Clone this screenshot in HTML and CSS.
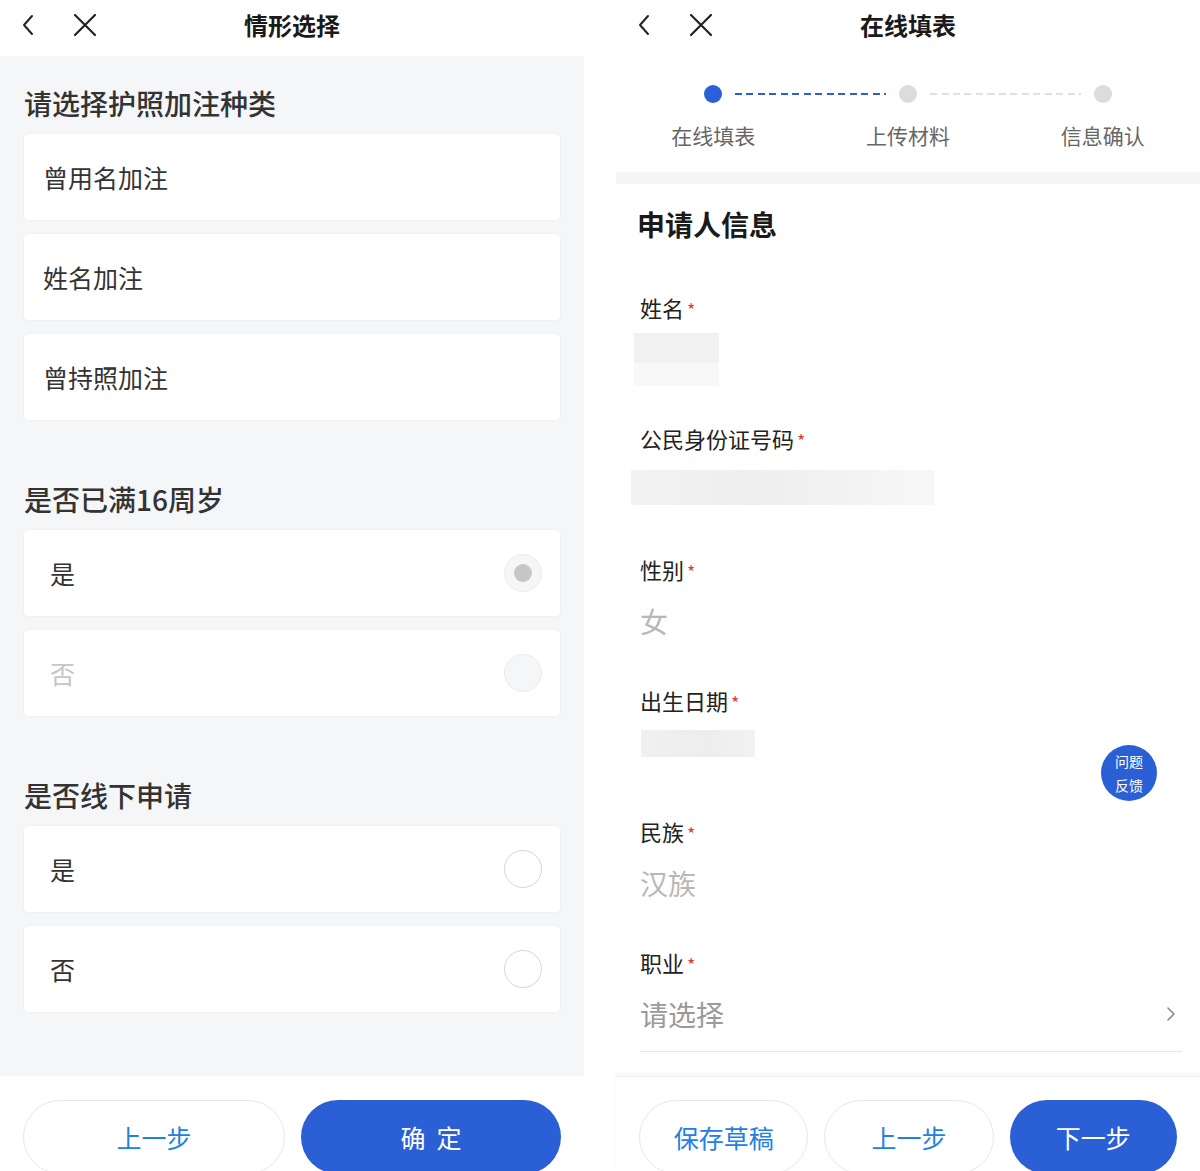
FILE: index.html
```html
<!DOCTYPE html>
<html lang="zh-CN">
<head>
<meta charset="utf-8">
<title>护照加注</title>
<link rel="stylesheet" href="styles.css">
</head>
<body>
<div class="screen">
  <section class="phone">
    <header class="nav">
      <div class="nav-icons">
        <svg class="ico" viewBox="0 0 24 24" width="24" height="24"><path d="M15 3 L7 12 L15 21" fill="none" stroke="#222" stroke-width="2" stroke-linecap="round" stroke-linejoin="round"/></svg>
        <svg class="ico" viewBox="0 0 24 24" width="24" height="24"><path d="M2 2 L22 22 M22 2 L2 22" fill="none" stroke="#222" stroke-width="2.2" stroke-linecap="round"/></svg>
      </div>
      <h1 class="nav-title">情形选择</h1>
    </header>
    <main class="choices">
      <h2 class="group-title first">请选择护照加注种类</h2>
      <div class="card-list">
        <div class="card">曾用名加注</div>
        <div class="card">姓名加注</div>
        <div class="card">曾持照加注</div>
      </div>

      <h2 class="group-title">是否已满16周岁</h2>
      <div class="card-list">
        <div class="card radio-row"><span>是</span><span class="radio checked-disabled"></span></div>
        <div class="card radio-row disabled"><span>否</span><span class="radio empty-disabled"></span></div>
      </div>

      <h2 class="group-title">是否线下申请</h2>
      <div class="card-list">
        <div class="card radio-row"><span>是</span><span class="radio"></span></div>
        <div class="card radio-row"><span>否</span><span class="radio"></span></div>
      </div>
    </main>
    <footer class="actions plain">
      <button class="btn ghost">上一步</button>
      <button class="btn primary">确&nbsp;&nbsp;定</button>
    </footer>
  </section>

  <section class="phone white">
    <header class="nav">
      <div class="nav-icons">
        <svg class="ico" viewBox="0 0 24 24" width="24" height="24"><path d="M15 3 L7 12 L15 21" fill="none" stroke="#222" stroke-width="2" stroke-linecap="round" stroke-linejoin="round"/></svg>
        <svg class="ico" viewBox="0 0 24 24" width="24" height="24"><path d="M2 2 L22 22 M22 2 L2 22" fill="none" stroke="#222" stroke-width="2.2" stroke-linecap="round"/></svg>
      </div>
      <h1 class="nav-title">在线填表</h1>
    </header>
    <div class="stepper">
      <div class="dots">
        <span class="dot active"></span>
        <span class="line active"></span>
        <span class="dot"></span>
        <span class="line"></span>
        <span class="dot"></span>
      </div>
      <div class="step-labels">
        <span>在线填表</span>
        <span>上传材料</span>
        <span>信息确认</span>
      </div>
    </div>
    <div class="band"></div>
    <main class="form">
      <h2 class="form-title">申请人信息</h2>
      <div class="field">
        <div class="label">姓名<i class="req">*</i></div>
        <div class="value"><span class="blur blur-name"></span></div>
      </div>
      <div class="field">
        <div class="label">公民身份证号码<i class="req">*</i></div>
        <div class="value"><span class="blur blur-id"></span></div>
      </div>
      <div class="field">
        <div class="label">性别<i class="req">*</i></div>
        <div class="value muted">女</div>
      </div>
      <div class="field">
        <div class="label">出生日期<i class="req">*</i></div>
        <div class="value"><span class="blur blur-date"></span></div>
      </div>
      <div class="field">
        <div class="label">民族<i class="req">*</i></div>
        <div class="value muted">汉族</div>
      </div>
      <div class="field select">
        <div class="label">职业<i class="req">*</i></div>
        <div class="value placeholder">
          <span>请选择</span>
          <svg viewBox="0 0 10 16" width="10" height="16"><path d="M2 2 L8 8 L2 14" fill="none" stroke="#888" stroke-width="1.6" stroke-linecap="round" stroke-linejoin="round"/></svg>
        </div>
      </div>
      <div class="feedback">问题<br>反馈</div>
    </main>
    <footer class="actions shadowed">
      <button class="btn ghost">保存草稿</button>
      <button class="btn ghost">上一步</button>
      <button class="btn primary">下一步</button>
    </footer>
  </section>
</div>
</body>
</html>
```

FILE: styles.css
```css
* { box-sizing: border-box; margin: 0; padding: 0; }

html, body {
  width: 1200px;
  height: 1171px;
  overflow: hidden;
  background: #fff;
  font-family: "Noto Sans CJK SC", "Noto Sans", sans-serif;
  color: #222;
}

.screen {
  display: flex;
  gap: 32px;
  height: 1171px;
}

.phone {
  width: 584px;
  height: 1171px;
  display: flex;
  flex-direction: column;
  background: #f5f6f8;
  position: relative;
}
.phone.white { background: #fff; }

.nav {
  height: 56px;
  flex: none;
  background: #fff;
  display: flex;
  align-items: center;
  position: relative;
}
.nav-icons {
  display: flex;
  gap: 32px;
  padding-left: 17px;
  padding-bottom: 6px;
  align-items: center;
}
.ico { display: block; }
.nav-title {
  position: absolute;
  left: 0; right: 0; top: 0;
  text-align: center;
  line-height: 50px;
  font-size: 24px;
  font-weight: 700;
  color: #1a1a1a;
  pointer-events: none;
}

/* left screen */
.choices {
  flex: 1;
  padding: 0 23px;
  display: flex;
  flex-direction: column;
}
.group-title {
  font-size: 28px;
  font-weight: 500;
  line-height: 36px;
  color: #333;
  margin-top: 60px;
  margin-bottom: 12px;
  padding-left: 1px;
}
.group-title.first { margin-top: 29px; }

.card-list {
  display: flex;
  flex-direction: column;
  gap: 12px;
}
.card {
  height: 88px;
  background: #fff;
  border: 1px solid #eef0f2;
  border-radius: 5px;
  display: flex;
  align-items: center;
  padding-left: 19px;
  font-size: 25px;
  color: #333;
}

.radio-row {
  justify-content: space-between;
  padding-left: 26px;
  padding-right: 18px;
}
.radio-row.disabled { color: #c6c6c6; }

.radio {
  width: 38px;
  height: 38px;
  border-radius: 50%;
  border: 1.5px solid #d6d6d6;
  background: #fff;
  display: flex;
  align-items: center;
  justify-content: center;
}
.radio.checked-disabled {
  border-color: #ececec;
  background: #f6f6f6;
}
.radio.checked-disabled::after {
  content: "";
  width: 18px;
  height: 18px;
  border-radius: 50%;
  background: #c6c6c6;
}
.radio.empty-disabled {
  border-color: #ececec;
  background: #f5f6f8;
}

/* bottom actions */
.actions {
  flex: none;
  height: 95px;
  background: #fff;
  display: flex;
  gap: 16px;
  padding: 24px 23px 0;
}
.actions.shadowed {
  box-shadow: 0 -3px 4px rgba(0, 0, 0, 0.04);
  border-top: 1px solid #f0f0f0;
  padding-top: 23px;
}
.btn {
  flex: 1;
  height: 74px;
  border-radius: 37px;
  font-family: inherit;
  font-size: 25px;
  cursor: pointer;
}
.btn.ghost {
  background: #fff;
  border: 1.5px solid #e8e8e8;
  color: #2180e6;
}
.btn.primary {
  background: #2a5fd6;
  border: none;
  color: #fff;
}

/* right screen */
.stepper {
  flex: none;
  height: 116px;
  padding-top: 29px;
  background: #fff;
}
.dots {
  display: flex;
  align-items: center;
  padding: 0 88px;
  height: 18px;
}
.dot {
  width: 18px;
  height: 18px;
  border-radius: 50%;
  background: #dcdcdc;
  flex: none;
}
.dot.active { background: #2a5fd6; }
.line {
  flex: 1;
  height: 2px;
  margin: 0 13px;
  background: repeating-linear-gradient(to right, #e0e0e0 0 7px, transparent 7px 11.5px);
}
.line.active {
  background: repeating-linear-gradient(to right, #2a5fd6 0 7px, transparent 7px 11.5px);
}
.step-labels {
  display: grid;
  grid-template-columns: repeat(3, 1fr);
  margin-top: 18px;
  text-align: center;
  font-size: 21px;
  line-height: 28px;
  color: #666;
}

.band {
  flex: none;
  height: 12px;
  background: #f4f5f7;
}

.form {
  flex: 1;
  padding: 22px 18px 0 24px;
  position: relative;
  overflow: hidden;
}
.form-title {
  font-size: 28px;
  font-weight: 700;
  line-height: 36px;
  color: #1a1a1a;
  margin-left: -3px;
  margin-bottom: 50px;
}
.field { margin-bottom: 46px; }
.label {
  font-size: 22px;
  line-height: 30px;
  height: 30px;
  color: #222;
  display: flex;
  align-items: center;
}
.req {
  font-style: normal;
  color: #e5383b;
  font-size: 18px;
  line-height: 18px;
  margin-left: 3px;
  padding-top: 4px;
}
.value {
  display: flow-root;
  margin-top: 19px;
  height: 36px;
  font-size: 28px;
  line-height: 36px;
}
.value.muted { color: #b8b8b8; }

.blur { display: block; }
.blur-name {
  width: 85px;
  height: 53px;
  margin: -8px 0 0 -6px;
  background: linear-gradient(to bottom, #f1f1f1 0 30px, #f8f8f8 30px 53px);
}
.blur-id {
  width: 303px;
  height: 35px;
  margin: -2px 0 0 -9px;
  background: linear-gradient(to right, #f2f2f2, #eeeeee 40%, #f7f7f7);
}
.blur-date {
  width: 114px;
  height: 27px;
  margin: -4px 0 0 1px;
  background: linear-gradient(to right, #f0f0f0, #ededed 60%, #f2f2f2);
}

.field.select {
  border-bottom: 1.5px solid #e6e6e6;
  margin-bottom: 0;
  padding-bottom: 19px;
}
.value.placeholder {
  color: #9a9a9a;
  display: flex;
  align-items: center;
  justify-content: space-between;
  padding-right: 6px;
}

.feedback {
  position: absolute;
  left: 485px;
  top: 561px;
  width: 56px;
  height: 56px;
  border-radius: 50%;
  background: #2a5fd6;
  color: #fff;
  font-size: 14px;
  line-height: 24px;
  text-align: center;
  padding-top: 4px;
}
```
